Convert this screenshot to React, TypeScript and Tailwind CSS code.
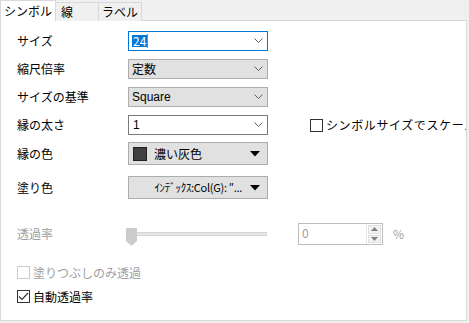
import { ReactNode } from 'react';

const font = { fontFamily: '"Noto Sans CJK JP", "Liberation Sans", sans-serif' };

function Chevron() {
  return (
    <svg width="9" height="6" viewBox="0 0 9 6" className="shrink-0">
      <polyline points="0.5,0.5 4.5,4.5 8.5,0.5" fill="none" stroke="#606060" strokeWidth="1" />
    </svg>
  );
}

function Triangle() {
  return (
    <svg width="10" height="6" viewBox="0 0 10 6" className="shrink-0">
      <polygon points="0,0 10,0 5,5.5" fill="#000" />
    </svg>
  );
}

function Row({ label, children, className }: { label: string; children: ReactNode; className?: string }) {
  return (
    <div className={`flex items-center ${className ?? ''}`}>
      <span className="w-[127px] shrink-0 pl-[16px] text-[12px] text-black leading-none">{label}</span>
      {children}
    </div>
  );
}

function Checkbox({ label, checked, disabled, wide }: { label: string; checked?: boolean; disabled?: boolean; wide?: boolean }) {
  return (
    <div className={`flex items-center gap-[3px] text-[12px] leading-none ${disabled ? 'text-[#a0a0a0]' : 'text-black'}`}>
      <span
        className={`flex h-[13px] w-[13px] shrink-0 items-center justify-center border bg-white ${disabled ? 'border-[#cccccc]' : 'border-[#333333]'}`}
      >
        {checked && (
          <svg width="11" height="9" viewBox="0 0 11 9">
            <polyline points="1,4.5 4,7.5 10,1" fill="none" stroke="#333" strokeWidth="1.2" />
          </svg>
        )}
      </span>
      <span className={`whitespace-nowrap ${wide ? 'tracking-[0.6px]' : ''}`}>{label}</span>
    </div>
  );
}

export default function App() {
  return (
    <div className="h-[323px] w-[469px] overflow-hidden bg-[#f0f0f0]" style={font}>
      {/* Tabs */}
      <div className="relative z-10 flex h-[21px] items-end">
        <div className="flex h-[21px] w-[56px] items-center justify-center border border-b-0 border-[#d9d9d9] bg-white text-[12px] text-black">
          シンボル
        </div>
        <div className="flex h-[19px] w-[43px] items-center border border-l-0 border-b-0 border-[#d9d9d9] bg-[#f0f0f0] pl-[5px] text-[12px] text-black">
          線
        </div>
        <div className="flex h-[19px] w-[43px] items-center justify-center border border-l-0 border-b-0 border-[#d9d9d9] bg-[#f0f0f0] text-[12px] text-black">
          ラベル
        </div>
      </div>

      {/* Panel */}
      <div className="-mt-px h-[301px] w-[467px] overflow-hidden border border-[#d9d9d9] bg-white">
        <div className="flex flex-col pt-[10px]">
          <Row label="サイズ">
            <div className="flex h-[20px] w-[140px] items-center justify-between border border-[#0078d7] bg-white pl-[3px] pr-[4px]">
              <span className="flex items-center text-[12px] leading-none">
                <span className="bg-[#0078d7] px-px text-white">24</span>
                <span className="h-[14px] w-px bg-[#e0701a]" />
              </span>
              <Chevron />
            </div>
          </Row>

          <Row label="縮尺倍率" className="mt-[8px]">
            <div className="flex h-[20px] w-[140px] items-center justify-between border border-[#adadad] bg-[#e1e1e1] pl-[3px] pr-[4px] text-[12px]">
              <span>定数</span>
              <Chevron />
            </div>
          </Row>

          <Row label="サイズの基準" className="mt-[8px]">
            <div className="flex h-[20px] w-[140px] items-center justify-between border border-[#adadad] bg-[#e1e1e1] pl-[3px] pr-[4px] text-[12px]">
              <span style={{ fontFamily: '"Liberation Sans", sans-serif' }}>Square</span>
              <Chevron />
            </div>
          </Row>

          <Row label="縁の太さ" className="mt-[8px]">
            <div className="flex h-[20px] w-[140px] shrink-0 items-center justify-between border border-[#7a7a7a] bg-white pl-[4px] pr-[4px] text-[12px]">
              <span style={{ fontFamily: '"Liberation Sans", sans-serif' }}>1</span>
              <Chevron />
            </div>
            <div className="ml-[42px] shrink-0">
              <Checkbox label="シンボルサイズでスケール" wide />
            </div>
          </Row>

          <Row label="縁の色" className="mt-[7px]">
            <div className="flex h-[23px] w-[140px] items-center justify-between border border-[#adadad] bg-[#e1e1e1] pl-[4px] pr-[7px] text-[12px]">
              <span className="flex items-center gap-[7px]">
                <span className="h-[14px] w-[14px] border border-[#222] bg-[#404040]" />
                <span>濃い灰色</span>
              </span>
              <Triangle />
            </div>
          </Row>

          <Row label="塗り色" className="mt-[11px]">
            <div className="flex h-[23px] w-[140px] items-center justify-end gap-[8px] border border-[#adadad] bg-[#e1e1e1] pr-[7px] text-[11px] tracking-[-0.3px]">
              <span className="whitespace-nowrap">ｲﾝﾃﾞｯｸｽ:Col(G): ″...</span>
              <Triangle />
            </div>
          </Row>

          {/* Transparency */}
          <div className="mt-[24px] flex h-[22px] items-center">
            <span className="w-[127px] shrink-0 pl-[16px] text-[12px] text-[#a0a0a0] leading-none">透過率</span>
            <div className="relative flex h-[22px] w-[140px] items-center">
              <div className="ml-[2px] h-[4px] w-[137px] border border-[#d6d6d6] bg-[#e7e7e7]" />
              <svg width="11" height="18" viewBox="0 0 11 18" className="absolute left-[-2px] top-[5px]">
                <polygon points="0,0 11,0 11,13 5.5,18 0,13" fill="#cccccc" />
              </svg>
            </div>
            <div className="ml-[30px] flex h-[22px] w-[85px] items-stretch border border-[#bdbdbd] bg-white">
              <span className="flex-1 pl-[3px] pt-[3px] text-[12px] leading-none text-[#a0a0a0]">0</span>
              <div className="flex w-[16px] flex-col gap-px border-l border-[#e6e6e6] p-px">
                <div className="flex flex-1 items-center justify-center border border-[#e0e0e0] bg-[#f2f2f2]">
                  <svg width="7" height="4" viewBox="0 0 7 4"><polygon points="0,4 7,4 3.5,0" fill="#808080" /></svg>
                </div>
                <div className="flex flex-1 items-center justify-center border border-[#e0e0e0] bg-[#f2f2f2]">
                  <svg width="7" height="4" viewBox="0 0 7 4"><polygon points="0,0 7,0 3.5,4" fill="#808080" /></svg>
                </div>
              </div>
            </div>
            <span className="ml-[10px] text-[12px] text-[#a0a0a0]">%</span>
          </div>

          <div className="mt-[21px] pl-[16px]">
            <Checkbox label="塗りつぶしのみ透過" disabled />
          </div>
          <div className="mt-[11px] pl-[16px]">
            <Checkbox label="自動透過率" checked />
          </div>
        </div>
      </div>
    </div>
  );
}
